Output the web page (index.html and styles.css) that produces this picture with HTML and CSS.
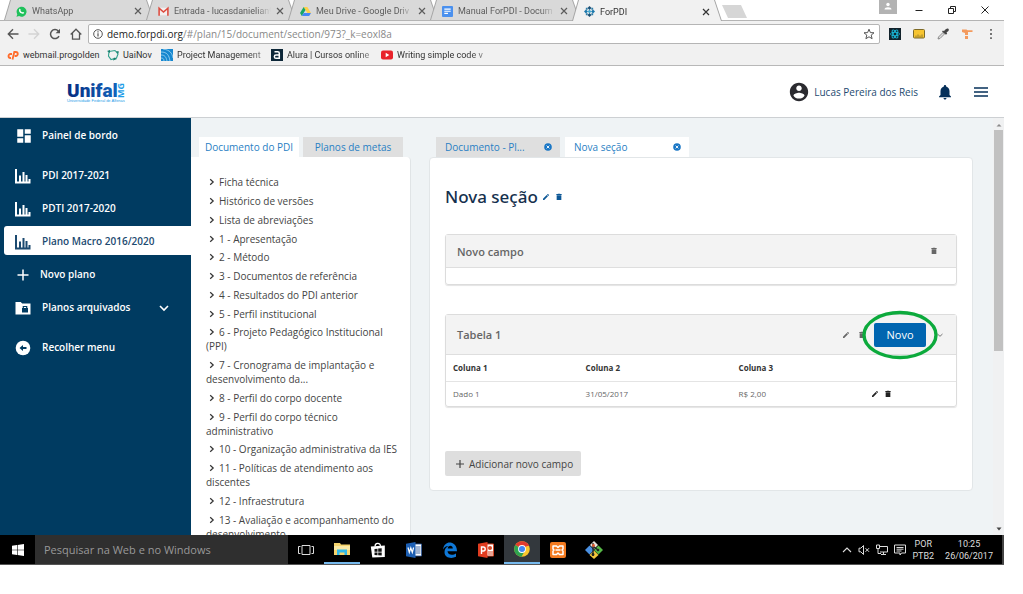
FILE: index.html
```html
<!DOCTYPE html>
<html lang="pt-BR">
<head>
<meta charset="utf-8">
<title>ForPDI</title>
<link rel="stylesheet" href="styles.css">
</head>
<body>
<svg class="sprite" aria-hidden="true">
  <symbol id="close" viewBox="0 0 8 8"><path d="M1 1l6 6M7 1L1 7" stroke="currentColor" stroke-width="1.2" fill="none"/></symbol>
  <symbol id="chev" viewBox="0 0 8 8"><path d="M2.2 1.2L5.2 4 2.2 6.8" stroke="currentColor" stroke-width="1.2" fill="none"/></symbol>
  <symbol id="chart" viewBox="0 0 16 16"><path d="M1 1v13.500h14.500M5 14V7.500M8.500 14V4M11.500 14V7M14.500 14v-3" stroke="currentColor" stroke-width="2" fill="none"/></symbol>
  <symbol id="pencil" viewBox="0 0 24 24"><path fill="currentColor" d="M3 17.250V21h3.750L17.810 9.940l-3.750-3.750L3 17.250zM20.710 7.040a1 1 0 000-1.410l-2.340-2.340a1 1 0 00-1.410 0l-1.830 1.830 3.750 3.750 1.830-1.830z"/></symbol>
  <symbol id="trash" viewBox="0 0 24 24"><path fill="currentColor" d="M5 21h14V7H5v14zM20 3h-4l-1-1H9L8 3H4v3h16V3z"/></symbol>
  <symbol id="xcircle" viewBox="0 0 8 8"><circle cx="4" cy="4" r="3.800" fill="currentColor"/><path d="M2.600 2.600l2.800 2.800M5.400 2.600L2.600 5.400" stroke="#fff" stroke-width=".9"/></symbol>
</svg>

<div class="screen">
  <header class="browser">
    <div class="tabstrip">
      <a class="tab" href="#"><svg class="i11" viewBox="0 0 12 12"><path d="M.5 11.600l.9-2.700A5.400 5.400 0 1 1 3.400 10.900z" fill="#1fc15b"/><path d="M3.700 3.200c1-.8 1.200.4 1.500 1.200-.8.800-.2 1.300 1.500 2.600.8-.8 1.200-.6 2.200.2-.4 2.400-3.600 1-4.600 0S3 4.300 3.700 3.200z" fill="#fff"/></svg><span class="tab-title">WhatsApp</span><svg class="i8"><use href="#close"/></svg></a>
      <a class="tab" href="#"><svg class="i11" viewBox="0 0 12 12"><path d="M1 2h10v8H1z" fill="#f4eeee"/><path d="M1.200 10.500V2.400L6 6.600l4.800-4.200v8.100" stroke="#dd4b3e" stroke-width="1.700" fill="none"/></svg><span class="tab-title">Entrada - lucasdanielian9</span><svg class="i8"><use href="#close"/></svg></a>
      <a class="tab" href="#"><svg class="i11" viewBox="0 0 12 12"><path d="M4 1h4l4 6.500H8z" fill="#ffcf48"/><path d="M4 1l2 3.400L2 11 0 7.500z" fill="#16a765"/><path d="M4 7.500h8L10 11H2z" fill="#4486f4"/></svg><span class="tab-title">Meu Drive - Google Driv</span><svg class="i8"><use href="#close"/></svg></a>
      <a class="tab" href="#"><svg class="i11" viewBox="0 0 12 12"><rect width="12" height="12" rx="1" fill="#4a90ee"/><path d="M2.500 3.500h7M2.500 5.700h7M2.500 8h4" stroke="#fff" stroke-width="1.300"/></svg><span class="tab-title">Manual ForPDI - Docum</span><svg class="i8"><use href="#close"/></svg></a>
      <a class="tab tab-active" href="#"><svg class="i11" viewBox="0 0 12 12"><path d="M6 0l2.200 2.200L6 4.400 3.800 2.200z" fill="#1a4e74"/><path d="M6 7.600l2.200 2.200L6 12 3.800 9.800z" fill="#1a4e74"/><path d="M2.200 3.800L4.400 6 2.200 8.200 0 6z" fill="#1b78ad"/><path d="M9.800 3.800L12 6 9.800 8.200 7.600 6z" fill="#1b78ad"/><path d="M6 3.900L8.100 6 6 8.100 3.900 6z" fill="#45a9cf"/><path d="M2 2h2v2H2zM8 2h2v2H8zM2 8h2v2H2zM8 8h2v2H8z" fill="#2f7ea8"/></svg><span class="tab-title">ForPDI</span><svg class="i8"><use href="#close"/></svg></a>
      <button class="newtab" aria-label="Nova guia"></button>
      <div class="wincontrols">
        <svg class="person" viewBox="0 0 18 14"><path d="M0 0h18v14H0z" fill="#b3b3b3"/><circle cx="9" cy="4.500" r="1.700" fill="#fff"/><path d="M5.500 9.500c0-3 7-3 7 0z" fill="#fff"/></svg>
        <svg class="i10" viewBox="0 0 10 10"><path d="M1.500 5.500h7" stroke="#222"/></svg>
        <svg class="i10" viewBox="0 0 10 10"><path d="M1.500 3.500h5v5h-5zM3.500 3.500v-2h5v5h-2" stroke="#222" fill="none"/></svg>
        <svg class="i10" viewBox="0 0 10 10"><path d="M1.500 1.500l7 7M8.500 1.500l-7 7" stroke="#222"/></svg>
      </div>
    </div>
    <div class="toolbar">
      <svg class="i12" viewBox="0 0 12 12"><path d="M11.500 6H1.500M6 1.300L1.300 6 6 10.700" stroke="#555" stroke-width="1.400" fill="none"/></svg>
      <svg class="i12" viewBox="0 0 12 12"><path d="M.5 6h10M6 1.300L10.700 6 6 10.700" stroke="#d3d3d3" stroke-width="1.400" fill="none"/></svg>
      <svg class="i12" viewBox="0 0 12 12"><path d="M10 8.200A4.500 4.500 0 1 1 9.300 3" stroke="#555" stroke-width="1.500" fill="none"/><path d="M11 .8v4.400H6.600z" fill="#555"/></svg>
      <svg class="i12" viewBox="0 0 12 12"><path d="M.7 6.500L6 1.200l5.300 5.300M2.500 5.200v5.900h7V5.200" stroke="#555" stroke-width="1.300" fill="none"/></svg>
      <div class="urlbar">
        <svg class="i10" viewBox="0 0 10 10"><circle cx="5" cy="5" r="4.300" stroke="#555" fill="none"/><path d="M5 4.300v3.200M5 2.300v1.100" stroke="#555" stroke-width="1.200"/></svg>
        <div class="url"><b>demo.forpdi.org</b>/#/plan/15/document/section/973?_k=eoxl8a</div>
        <svg class="i12" viewBox="0 0 12 12"><path d="M6 1.200l1.400 3.400 3.600.2-2.800 2.300.9 3.600L6 8.800l-3.100 1.900.9-3.600L1 4.800l3.600-.2z" stroke="#555" fill="none"/></svg>
      </div>
      <div class="extensions">
        <svg class="i12" viewBox="0 0 12 12"><path d="M0 0h12v12H0z" fill="#12222b"/><g fill="none" stroke="#1ab8d8" stroke-width=".9"><ellipse cx="6" cy="6" rx="4.600" ry="1.800"/><ellipse cx="6" cy="6" rx="4.600" ry="1.800" transform="rotate(60 6 6)"/><ellipse cx="6" cy="6" rx="4.600" ry="1.800" transform="rotate(120 6 6)"/></g></svg>
        <svg class="i12" viewBox="0 0 12 12"><rect x=".5" y="1.500" width="11" height="8.500" rx="1" fill="#f7c531" stroke="#7d6a28"/><path d="M3 9.500v-2M5 9.500v-3M7 9.500v-2M9 9.500v-3" stroke="#7d6a28" stroke-width=".8"/></svg>
        <svg class="i12" viewBox="0 0 12 12"><path d="M1 11l.5-2L6 4.500 7.500 6 3 10.500z" fill="#ddd" stroke="#777" stroke-width=".8"/><path d="M5 3.500l1-1 1 .7C8.500 1 10.500 0 11.500 1s-.2 2.500-2 3.500l.7 1-1.200 1.200z" fill="#444"/></svg>
        <svg class="i12" viewBox="0 0 12 12"><path d="M1 1.500h4.500l1 .8h5v1.700H7V11H4V5L1 4z" fill="#f39a5d"/><path d="M4 7.500h3" stroke="#f1f1f1"/></svg>
        <svg class="i12" viewBox="0 0 12 12"><path d="M5.200 1h1.600v1.800H5.200zM5.200 5.100h1.600v1.800H5.200zM5.200 9.200h1.600V11H5.200z" fill="#555"/></svg>
      </div>
    </div>
    <nav class="bookmarks">
      <a class="bm-cp" href="#"><svg class="i12" viewBox="0 0 12 12"><path d="M5 5H3.500a2 2 0 0 0 0 4H4M5.500 10.500L7.300 3h1.500a2 2 0 0 1 0 4H7.700" stroke="#ff6c2c" stroke-width="1.800" fill="none"/></svg><span>webmail.progolden</span></a>
      <a class="bm-uai" href="#"><svg class="i12" viewBox="0 0 12 12"><path d="M2 2.500l6-1L11 5l-1.500 4L4 10.500 1.500 7z" fill="none" stroke="#2fa08b" stroke-width="1.100"/><path d="M0 2l3-1v3zM10 10l-4 1.500 1-3zM12 2.500L9 2l2 3z" fill="#167e6d"/></svg><span>UaiNov</span></a>
      <a class="bm-pm" href="#"><svg class="i12" viewBox="0 0 12 12"><path d="M0 0h12v12H0z" fill="#1687cf"/><path d="M0 3c6 0 8 3 9 9M0 6c4 0 5 2 6 6M2 0c7 1 9 4 10 9M0 9c2 0 3 1 3 3" stroke="#a5d8f4" stroke-width=".8" fill="none"/></svg><span>Project Management</span></a>
      <a class="bm-alura" href="#"><svg class="i12" viewBox="0 0 12 12"><path d="M0 0h12v12H0z" fill="#0d2738"/><path d="M3.500 2.800h3.300q1.500 0 1.500 1.500v5H5A1.600 1.600 0 0 1 5 6h3" stroke="#fff" stroke-width="1.500" fill="none"/></svg><span>Alura | Cursos online</span></a>
      <a class="bm-yt" href="#"><svg class="i12" viewBox="0 0 12 12"><rect y="1.500" width="12" height="9" rx="2" fill="#e8222a"/><path d="M4.700 3.800L8.300 6 4.700 8.200z" fill="#fff"/></svg><span>Writing simple code v</span></a>
    </nav>
  </header>

  <header class="apphead">
    <svg class="logo" viewBox="0 0 60 24" role="img" aria-label="Unifal MG">
      <defs><linearGradient id="lg"><stop offset="0" stop-color="#062c80"/><stop offset="1" stop-color="#1265bd"/></linearGradient></defs>
      <text class="logo-name" x="1" y="16" fill="url(#lg)">Unifal</text>
      <text class="logo-mg" transform="translate(58 17) rotate(-90)" fill="#1f9ee8">MG</text>
      <text class="logo-sub" x="1" y="21" fill="#1f9ee8">Universidade Federal de Alfenas</text>
    </svg>
    <div class="user">
      <svg class="i22" viewBox="0 0 24 24"><path fill="#2b2b30" d="M12 2C6.480 2 2 6.480 2 12s4.480 10 10 10 10-4.480 10-10S17.520 2 12 2zm0 3c1.660 0 3 1.340 3 3s-1.340 3-3 3-3-1.340-3-3 1.340-3 3-3zm0 14.200c-2.500 0-4.710-1.280-6-3.220.03-1.990 4-3.080 6-3.080 1.990 0 5.970 1.090 6 3.080-1.290 1.940-3.500 3.220-6 3.220z"/></svg>
      <a class="username" href="#">Lucas Pereira dos Reis</a>
      <svg class="bell" viewBox="0 0 24 24"><path fill="#06305a" d="M12 22c1.100 0 2-.9 2-2h-4c0 1.100.89 2 2 2zm6-6v-5c0-3.070-1.640-5.640-4.500-6.320V4c0-.83-.67-1.500-1.500-1.500s-1.500.67-1.500 1.500v.68C7.630 5.360 6 7.920 6 11v5l-2 2v1h16v-1l-2-2z"/></svg>
      <svg class="burger" viewBox="0 0 14 10"><path d="M0 1h14M0 5h14M0 9h14" stroke="#06305a" stroke-width="1.500"/></svg>
    </div>
  </header>

  <main class="app">
    <nav class="sidebar">
      <div class="group"><a class="item" href="#"><svg class="i18" viewBox="0 0 24 24"><path fill="currentColor" d="M3 13h8V3H3v10zm0 8h8v-6H3v6zm10 0h8V11h-8v10zm0-18v6h8V3h-8z"/></svg><span>Painel de bordo</span></a></div>
      <div class="group">
        <a class="item" href="#"><svg class="i16"><use href="#chart"/></svg><span>PDI 2017-2021</span></a>
        <a class="item" href="#"><svg class="i16"><use href="#chart"/></svg><span>PDTI 2017-2020</span></a>
        <a class="item item-active" href="#"><svg class="i16"><use href="#chart"/></svg><span>Plano Macro 2016/2020</span></a>
        <a class="item item-new" href="#"><svg class="i16" viewBox="0 0 16 16"><path d="M8 2.500v11M2.500 8h11" stroke="currentColor" stroke-width="1.500"/></svg><span>Novo plano</span></a>
        <a class="item" href="#"><svg class="i16" viewBox="0 0 16 16"><path d="M.5 2h5.200l1.500 1.500H15.500v11H.5z" fill="currentColor"/><path d="M7 8h6v4.500H7z" fill="#003b61"/><path d="M8.300 8V6.500h3.400V8" stroke="#003b61" stroke-width="1.200" fill="none"/></svg><span>Planos arquivados</span><svg class="i10 caret" viewBox="0 0 10 10"><path d="M1 3l4 4 4-4" stroke="currentColor" stroke-width="1.600" fill="none"/></svg></a>
      </div>
      <div class="group"><a class="item" href="#"><svg class="i16" viewBox="0 0 16 16"><circle cx="8" cy="8" r="7.300" fill="currentColor"/><path d="M4.500 8L8 5v2h3.500v2H8v2z" fill="#003b61"/></svg><span>Recolher menu</span></a></div>
    </nav>

    <section class="tree">
      <div class="tree-tabs"><a class="ptab ptab-on" href="#">Documento do PDI</a><a class="ptab" href="#">Planos de metas</a></div>
      <ul class="tree-list">
        <li><svg class="i8"><use href="#chev"/></svg><a href="#">Ficha técnica</a></li>
        <li><svg class="i8"><use href="#chev"/></svg><a href="#">Histórico de versões</a></li>
        <li><svg class="i8"><use href="#chev"/></svg><a href="#">Lista de abreviações</a></li>
        <li><svg class="i8"><use href="#chev"/></svg><a href="#">1 - Apresentação</a></li>
        <li><svg class="i8"><use href="#chev"/></svg><a href="#">2 - Método</a></li>
        <li><svg class="i8"><use href="#chev"/></svg><a href="#">3 - Documentos de referência</a></li>
        <li><svg class="i8"><use href="#chev"/></svg><a href="#">4 - Resultados do PDI anterior</a></li>
        <li><svg class="i8"><use href="#chev"/></svg><a href="#">5 - Perfil institucional</a></li>
        <li><svg class="i8"><use href="#chev"/></svg><a href="#">6 - Projeto Pedagógico Institucional (PPI)</a></li>
        <li><svg class="i8"><use href="#chev"/></svg><a href="#">7 - Cronograma de implantação e desenvolvimento da...</a></li>
        <li><svg class="i8"><use href="#chev"/></svg><a href="#">8 - Perfil do corpo docente</a></li>
        <li><svg class="i8"><use href="#chev"/></svg><a href="#">9 - Perfil do corpo técnico administrativo</a></li>
        <li><svg class="i8"><use href="#chev"/></svg><a href="#">10 - Organização administrativa da IES</a></li>
        <li><svg class="i8"><use href="#chev"/></svg><a href="#">11 - Políticas de atendimento aos discentes</a></li>
        <li><svg class="i8"><use href="#chev"/></svg><a href="#">12 - Infraestrutura</a></li>
        <li><svg class="i8"><use href="#chev"/></svg><a href="#">13 - Avaliação e acompanhamento do desenvolvimento</a></li>
      </ul>
    </section>

    <section class="work">
      <div class="work-tabs">
        <div class="wtab"><a href="#">Documento - Pl...</a><button aria-label="Fechar Documento"><svg class="i8"><use href="#xcircle"/></svg></button></div>
        <div class="wtab wtab-on"><a href="#">Nova seção</a><button aria-label="Fechar Nova seção"><svg class="i8"><use href="#xcircle"/></svg></button></div>
      </div>
      <div class="card">
        <h1>Nova seção <button aria-label="Editar seção"><svg class="i8"><use href="#pencil"/></svg></button><button aria-label="Excluir seção"><svg class="i8"><use href="#trash"/></svg></button></h1>
        <div class="field">
          <div class="field-head short"><b>Novo campo</b><button class="lone" aria-label="Excluir campo"><svg class="i8"><use href="#trash"/></svg></button></div>
          <div class="field-body"></div>
        </div>
        <div class="field">
          <div class="field-head"><b>Tabela 1</b>
            <button aria-label="Editar tabela"><svg class="i8"><use href="#pencil"/></svg></button>
            <button aria-label="Excluir tabela"><svg class="i8"><use href="#trash"/></svg></button>
            <div class="new-wrap"><button class="new">Novo</button><svg class="ring" viewBox="0 0 76 50"><ellipse cx="38" cy="25" rx="36" ry="22.500" fill="none" stroke="#0caa3c" stroke-width="3.400"/></svg></div>
            <button class="fold" aria-label="Recolher tabela"><svg class="i8" viewBox="0 0 8 8"><path d="M1.500 3L4 5.300 6.500 3" stroke="#777" fill="none"/></svg></button>
          </div>
          <table>
            <thead><tr><th>Coluna 1</th><th>Coluna 2</th><th>Coluna 3</th><th></th></tr></thead>
            <tbody><tr><td>Dado 1</td><td>31/05/2017</td><td>R$ 2,00</td><td><div class="rowact"><button aria-label="Editar linha"><svg class="i8"><use href="#pencil"/></svg></button><button aria-label="Excluir linha"><svg class="i8"><use href="#trash"/></svg></button></div></td></tr></tbody>
          </table>
        </div>
        <button class="add"><svg class="i10" viewBox="0 0 10 10"><path d="M5 1v8M1 5h8" stroke="#444" stroke-width="1.200"/></svg>Adicionar novo campo</button>
      </div>
    </section>

    <div class="scroll"><svg class="i8" viewBox="0 0 8 8"><path d="M1.500 5.500L4 3l2.500 2.500z" fill="#8a8a8a"/></svg><div class="track"><div class="thumb"></div></div><svg class="i8" viewBox="0 0 8 8"><path d="M1.500 2.500L4 5.500l2.500-3z" fill="#444"/></svg></div>
  </main>

  <footer class="taskbar">
    <button class="start" aria-label="Iniciar"><svg class="i12" viewBox="0 0 12 12"><path d="M0 1.700L5 1v4.700H0zM5.600.9L12 0v5.700H5.600zM0 6.300h5V11l-5-.7zM5.600 6.300H12V12l-6.400-.9z" fill="#fff"/></svg></button>
    <input class="search" type="text" aria-label="Pesquisar" placeholder="Pesquisar na Web e no Windows">
    <div class="apps">
      <button aria-label="Visão de tarefas"><svg class="i16" viewBox="0 0 16 16"><path d="M4 3.500h8v9H4zM2.500 4.500h-2v7h2M13.500 4.500h2v7h-2" stroke="#ddd" fill="none"/></svg></button>
      <button class="running" aria-label="Explorador"><svg class="i16" viewBox="0 0 16 16"><path d="M0 2h6l1 1.500h9V14H0z" fill="#f5d36b"/><path d="M0 5h16v4H0z" fill="#fbe9a4"/><path d="M3 8.500h10V14h-2.500v-2.500h-5V14H3z" fill="#2fb8e8"/></svg></button>
      <button aria-label="Loja"><svg class="i16" viewBox="0 0 16 16"><path d="M.8 4.500l14-1V15l-12.500.5z" fill="#fff"/><path d="M5 4.500C5 .5 10 .5 10.500 4" stroke="#fff" stroke-width="1.200" fill="none"/><path d="M4.500 7l3-.3v3h-3zM8.200 6.600l3.500-.3v3.400H8.200zM4.500 10.400h3v2.800l-3-.3zM8.200 10.400h3.500v3.200l-3.500-.3z" fill="#111"/></svg></button>
      <button aria-label="Word"><svg class="i16" viewBox="0 0 16 16"><path d="M8 2h7.500v12H8z" fill="#fff" stroke="#2b579a" stroke-width=".8"/><path d="M9.500 5h5M9.500 7h5M9.500 9h5M9.500 11h5" stroke="#2b579a" stroke-width=".9"/><path d="M0 1.800L9.500 0v16L0 14.200z" fill="#1d5fb3"/><path d="M2 5.500l1.300 5L4.800 6l1.500 4.500 1.300-5" stroke="#fff" stroke-width="1.200" fill="none"/></svg></button>
      <button aria-label="Edge"><svg class="i16" viewBox="0 0 16 16"><path d="M1 7.500C2 1.500 6-.2 9.500.8S15 5 15 9.300H5.500c.3 4 5.500 4.400 8.500 2.200v3.300C9.500 17.200 2.500 16 2.500 10c0-3 1.800-5 4-6C3.500 4.200 2 5.500 1 7.500zM5.700 6.500h5.100c0-4-4.900-3.500-5.100 0z" fill="#0f78d7"/></svg></button>
      <button aria-label="PowerPoint"><svg class="i16" viewBox="0 0 16 16"><path d="M8 2h7.500v12H8z" fill="#fff" stroke="#d24726"/><circle cx="12" cy="6" r="2" fill="#d24726"/><path d="M10 10h5M10 12h5" stroke="#d24726"/><path d="M0 1.800L9.500 0v16L0 14.200z" fill="#e03c20"/><path d="M3.500 12V5h1.700a1.900 1.900 0 0 1 0 4H3.500" stroke="#fff" stroke-width="1.400" fill="none"/></svg></button>
      <button class="running current" aria-label="Chrome"><svg class="i16" viewBox="0 0 16 16"><circle cx="8" cy="8" r="7.800" fill="#f9c72e"/><path d="M8 8L1.250 4.100A7.800 7.800 0 0 1 14.750 4.100z" fill="#e23c2e"/><path d="M1.250 4.100A7.800 7.800 0 0 0 7.500 15.800L11 9.500 8 8z" fill="#2ea44f"/><path d="M8 4.100h6.750L15 5H8z" fill="#e23c2e"/><circle cx="8" cy="8" r="3.900" fill="#fff"/><circle cx="8" cy="8" r="3" fill="#4387f2"/></svg></button>
      <button aria-label="XAMPP"><svg class="i16" viewBox="0 0 16 16"><rect width="16" height="16" rx="2" fill="#f47b20"/><path d="M3 4h3.500L8 5.500 9.500 4H13v3l-1 1 1 1v3.500H9.500L8 11l-1.500 1.500H3V9l1-1-1-1z" fill="none" stroke="#fff" stroke-width="1.500" stroke-linejoin="round"/><path d="M5.500 8h5" stroke="#fff" stroke-width="1.500"/></svg></button>
      <button aria-label="Git"><svg class="i18" viewBox="0 0 18 18"><path d="M9 0l4 4-4 4-4-4z" fill="#e9e2dc"/><path d="M4.500 4.500L9 9l-4.500 4.500L0 9z" fill="#4a90e2"/><path d="M13.500 4.500L18 9l-4.500 4.500L9 9z" fill="#57b947"/><path d="M9 9.500l4.500 4.500L9 18l-4.500-4z" fill="#f4c83c"/><path d="M8 2v13M8.500 5.500L13 9" stroke="#222" stroke-width="1.300" fill="none"/><circle cx="8.500" cy="4.500" r="1.400" fill="#e3562b"/><circle cx="8" cy="13.500" r="1.400" fill="#222"/><circle cx="13" cy="9" r="1.300" fill="#222"/></svg></button>
    </div>
    <div class="tray">
      <svg class="i10" viewBox="0 0 10 10"><path d="M1 7l4-4 4 4" stroke="#ddd" stroke-width="1.100" fill="none"/></svg>
      <svg class="i12" viewBox="0 0 12 12"><path d="M1 4.200h1.800L5.500 1.500v9L2.800 7.800H1zM7.500 4.200L11 7.800M11 4.200L7.500 7.800" stroke="#ddd" fill="none"/></svg>
      <svg class="i12" viewBox="0 0 12 12"><path d="M3.500 2.500h8v5.500H4M7.500 8v2.500M5 10.500h5M.5 1h3v3.500h-3zM2 4.500v5h3" stroke="#ddd" fill="none"/></svg>
      <svg class="i12" viewBox="0 0 12 12"><path d="M.5 1h11v8H7.500L6 11V9H.5zM2.500 3.500h7M2.500 5.200h7M2.500 7h5" stroke="#ddd" fill="none"/></svg>
      <div class="lang">POR<br>PTB2</div>
      <div class="clock">10:25<br>26/06/2017</div>
    </div>
  </footer>
</div>
</body>
</html>
```
FILE: styles.css
```css
* { box-sizing: border-box; }
body { margin: 0; background: #fff; font-family: "Open Sans", "Noto Sans", sans-serif; font-size: 10px; color: #444; }
a { color: inherit; text-decoration: none; }
button { font: inherit; color: inherit; background: none; border: 0; padding: 0; display: inline-flex; align-items: center; justify-content: center; }
svg { flex: none; display: block; }
.sprite { display: none; }
.i8 { width: 8px; height: 8px; }
.i10 { width: 10px; height: 10px; }
.i11 { width: 11px; height: 11px; }
.i12 { width: 12px; height: 12px; }
.i16 { width: 16px; height: 16px; }
.i18 { width: 18px; height: 18px; }
.i22 { width: 22px; height: 22px; }

.screen { display: flex; flex-direction: column; height: calc(100vh - 29px); margin-right: 19px; }

/* browser chrome */
.browser { background: #f1f1f1; border-bottom: 1px solid #b8b8b8; color: #444; }
.tabstrip { display: flex; height: 21px; padding-left: 4px; background: #fff; border-bottom: 1px solid #b4b4b4; }
.tab { position: relative; isolation: isolate; display: flex; align-items: center; gap: 5px; flex: 0 1 150px; min-width: 0; height: 20px; margin-right: -8px; padding: 2px 12px 0 12px; font: 9px Roboto, sans-serif; color: #5c5c5c; background: #a5a5a5; clip-path: polygon(6px 0, calc(100% - 7px) 0, 100% 100%, 0 100%); }
.tab::before { content: ""; position: absolute; z-index: -1; inset: 0 1px; background: #d9d9d9; clip-path: inherit; }
.tab-active { height: 21px; color: #333; }
.tab-active::before { background: #f1f1f1; }
.tab-title { flex: 1; min-width: 0; white-space: nowrap; mask-image: linear-gradient(to right, #000 85%, transparent); }
.newtab { width: 25px; height: 13px; margin: 5px 0 0 8px; background: #d6d6d6; clip-path: polygon(0 0, 19px 0, 100% 100%, 6px 100%); }
.wincontrols { display: flex; align-items: center; gap: 23px; margin-left: auto; padding-right: 14px; }
.person { width: 18px; height: 14px; align-self: flex-start; margin-right: -6px; }

.toolbar { display: flex; align-items: center; gap: 9px; height: 26px; padding: 0 7px; }
.urlbar { flex: 1; display: flex; align-items: center; gap: 4px; height: 20px; margin-left: -3px; padding: 0 4px; background: #fff; border: 1px solid #b5b5b5; border-radius: 2px; }
.url { flex: 1; color: #888; font-size: 10px; }
.url b { font-weight: 400; color: #222; }
.extensions { display: flex; gap: 12px; }

.bookmarks { display: flex; height: 18px; padding: 0 0 2px 7px; font: 9px Roboto, sans-serif; color: #333; }
.bookmarks a { display: flex; align-items: center; gap: 4px; }
.bookmarks span { white-space: nowrap; }
.bm-cp { width: 100px; }
.bm-uai { width: 54px; }
.bm-pm, .bm-alura { width: 110px; }
.bm-yt { width: 102px; }
.bm-pm span, .bm-alura span, .bm-yt span { mask-image: linear-gradient(to right, #000 85%, #0008); }

/* application header */
.apphead { display: flex; align-items: center; justify-content: space-between; flex: none; height: 52px; padding: 0 16px 0 66px; background: #fff; border-bottom: 1px solid #cdd0d3; }
.logo { width: 60px; height: 24px; margin-top: 2px; }
.logo-name { font: 900 19px Roboto, sans-serif; }
.logo-mg { font: 700 9px "Open Sans", sans-serif; }
.logo-sub { font: 400 4px "Liberation Sans", sans-serif; }
.user { display: flex; align-items: center; color: #1c4a70; }
.username { margin-left: 4px; font-size: 10px; }
.bell { width: 18px; height: 18px; margin: 0 20px 0 18px; }
.burger { width: 14px; height: 10px; }

/* application body */
.app { flex: 1; display: flex; min-height: 0; overflow: hidden; background: #eff3f5; }
.sidebar { flex: none; width: 191px; background: #003b61; color: #fff; font-weight: 600; overflow: hidden; }
.group { margin-bottom: 7px; }
.item { display: flex; align-items: center; gap: 11px; height: 33px; padding-left: 15px; }
.item svg { margin-top: 3px; }
.item .i18 { margin-right: -2px; }
.item-active { height: 29px; margin: 2px 0 2px 4px; padding-left: 11px; background: #fff; color: #1c4a70; border-radius: 3px 0 0 3px; }
.item-new { gap: 9px; }
.caret { margin-left: auto; margin-right: 22px; }

.tree { flex: none; display: flex; flex-direction: column; width: 220px; padding-top: 19px; }
.tree-tabs { display: flex; gap: 4px; padding-left: 8px; }
.ptab { width: 100px; height: 20px; line-height: 20px; text-align: center; background: #dfdfdf; color: #2a7fc4; }
.ptab-on { background: #fff; }
.tree-list { flex: 1; margin: 0; padding: 18px 9px 0 15px; list-style: none; background: #fff; border-right: 1px solid #e0e4e6; border-radius: 0 4px 0 0; line-height: 14px; }
.tree-list li { margin-bottom: 5px; }
.tree-list li:nth-child(4n) { margin-bottom: 4px; }
.tree-list svg { display: inline-block; margin: 0 3px 0 2px; color: #333; }

.work { flex: 1; min-width: 0; padding: 19px 20px 0 18px; }
.work-tabs { display: flex; gap: 5px; padding-left: 7px; }
.wtab { display: flex; align-items: center; justify-content: space-between; width: 124px; height: 20px; padding: 0 8px 0 9px; background: #dfdfdf; color: #2a7fc4; }
.wtab-on { background: #fff; }
.wtab button { color: #1976c5; }
.card { padding: 28px 15px 14px 15px; background: #fff; border: 1px solid #e2e6e8; border-radius: 4px; }
h1 { display: flex; align-items: center; gap: 4px; margin: 0 0 26px; font: 500 17px/22px "Noto Sans", sans-serif; color: #15304d; }
h1 button { color: #0c5796; }
h1 button + button { margin-left: 1px; }
.field { margin-bottom: 29px; border: 1px solid #dcdcdc; border-radius: 3px; box-shadow: 0 1px 1px #e4e4e4; }
.field-head { display: flex; align-items: center; gap: 8px; height: 40px; padding: 0 12px 0 11px; background: #f3f3f3; border-bottom: 1px solid #dedede; color: #666; font-size: 11px; }
.field-head b { flex: 1; font-weight: 600; }
.field-head.short { height: 33px; }
.field-head .lone { margin-right: 6px; }
.fold { margin-left: 2px; }
.field-body { height: 16px; }
.new-wrap { position: relative; }
.new { width: 52px; height: 24px; background: #0065b0; color: #fff; border-radius: 2px; }
.ring { position: absolute; left: -12px; top: -13px; width: 76px; height: 50px; pointer-events: none; }
table { width: 100%; border-collapse: collapse; table-layout: fixed; font-size: 8px; line-height: 12px; }
th, td { padding: 7px; text-align: left; color: #666; }
td { padding: 6px 7px; }
th { color: #333; font-weight: 700; border-bottom: 1px solid #e4e4e4; }
th:nth-child(1), th:nth-child(3) { width: 26%; }
th:nth-child(2) { width: 30%; }
.rowact { display: flex; gap: 5px; color: #222; }
.add { gap: 4px; height: 25px; margin-top: 15px; padding: 0 8px 0 10px; background: #dedede; border-radius: 2px; color: #444; }

.scroll { flex: none; display: flex; flex-direction: column; align-items: center; width: 11px; padding: 3px 0 2px; background: #f0f1f2; }
.track { flex: 1; width: 9px; padding-top: 1px; }
.thumb { height: 56%; background: #c1c1c1; }

/* taskbar */
.taskbar { display: flex; flex: none; height: 30px; background: #000; color: #ddd; border-bottom: 1px solid #555; }
.start { width: 35px; }
.search { width: 253px; border: 0; padding: 0 9px; background: #2f2f2f; color: #ccc; font: inherit; font-size: 11px; }
.search::placeholder { color: #999; opacity: 1; }
.apps { display: flex; }
.apps button { width: 36px; }
.apps .running { border-bottom: 2px solid #76b9ed; }
.apps .current { background: #33383d; }
.tray { display: flex; align-items: center; gap: 6px; margin-left: auto; padding-right: 9px; font: 9px/12px Roboto, sans-serif; text-align: center; border-right: 2px solid #444; }
.clock { margin-left: 5px; }
```
